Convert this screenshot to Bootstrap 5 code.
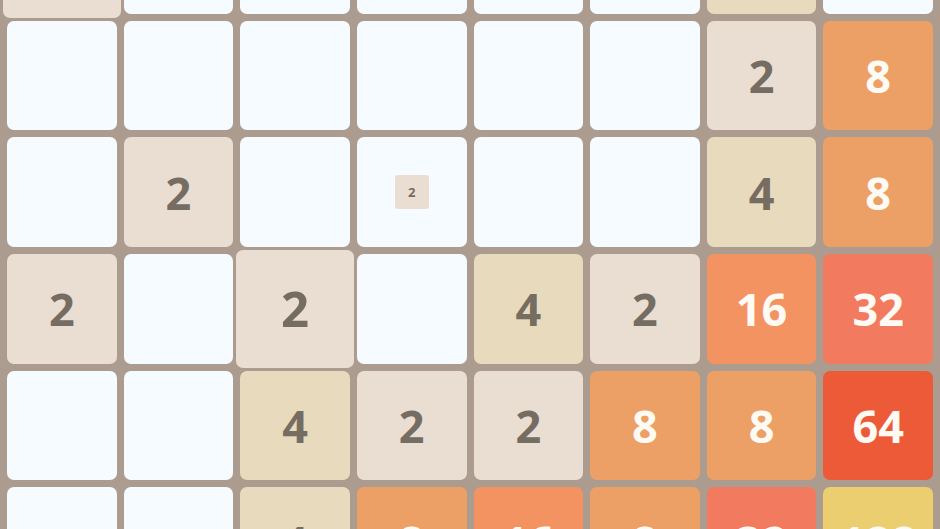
<!DOCTYPE html>
<html lang="en">
<head>
<meta charset="utf-8">
<meta name="viewport" content="width=device-width, initial-scale=1">
<title>2048</title>
<link href="https://cdn.jsdelivr.net/npm/bootstrap@5.3.0/dist/css/bootstrap.min.css" rel="stylesheet">
<style>
  body { background: #ab9c8f; font-family: "Open Sans", Lato, sans-serif; }
  .board {
    display: grid;
    grid-template-columns: repeat(8, minmax(0, 1fr));
    gap: 7px;
    padding: 7px;
    margin-top: -103px; /* the first row is scrolled mostly out of view */
  }
  .cell { aspect-ratio: 1; background: #f6fbff; border-radius: 7px; }
  .tile { border-radius: 7px; font-size: 45px; line-height: 1; font-weight: 700; color: #fffaf3; }
  .t2 { background: #eaddd2; color: #756c62; }
  .t4 { background: #e8dabc; color: #756c62; }
  .t8 { background: #eca066; }
  .t16 { background: #f39362; }
  .t32 { background: #f17a5f; }
  .t64 { background: #ed5a38; }
  .t128 { background: #ebce70; }
  .holder { background: transparent; }
  .grown { margin: -4px; font-size: 49px; z-index: 1; }
  .spawning { flex: 0 0 34px; height: 34px; border-radius: 3px; font-size: 13px; }
</style>
</head>
<body>
<main class="vh-100 overflow-hidden">
  <div class="board" id="board"></div>
</main>
<script src="https://cdn.jsdelivr.net/npm/bootstrap@5.3.0/dist/js/bootstrap.bundle.min.js"></script>
<script>
  const rows = [
    [2, 0, 0, 0, 0, 0, 4, 0],
    [0, 0, 0, 0, 0, 0, 2, 8],
    [0, 2, 0, 2, 0, 0, 4, 8],
    [2, 0, 2, 0, 4, 2, 16, 32],
    [0, 0, 4, 2, 2, 8, 8, 64],
    [0, 0, 4, 8, 16, 8, 32, 128]
  ];
  // Tiles in the middle of an animation, keyed by row,column
  const states = { '0,0': 'grown', '3,2': 'grown', '2,3': 'spawning' };
  const board = document.getElementById('board');
  rows.forEach((row, r) => row.forEach((value, c) => {
    const cell = document.createElement('div');
    const state = states[r + ',' + c] || '';
    cell.className = 'cell d-flex';
    if (state === 'spawning') cell.classList.add('align-items-center', 'justify-content-center');
    else if (value) cell.classList.add('holder');
    if (value) {
      const tile = document.createElement('div');
      tile.className = `tile t${value} ${state} d-flex flex-fill align-items-center justify-content-center`;
      if (state === 'spawning') tile.classList.remove('flex-fill');
      tile.textContent = value;
      cell.append(tile);
    }
    board.append(cell);
  }));
</script>
</body>
</html>
